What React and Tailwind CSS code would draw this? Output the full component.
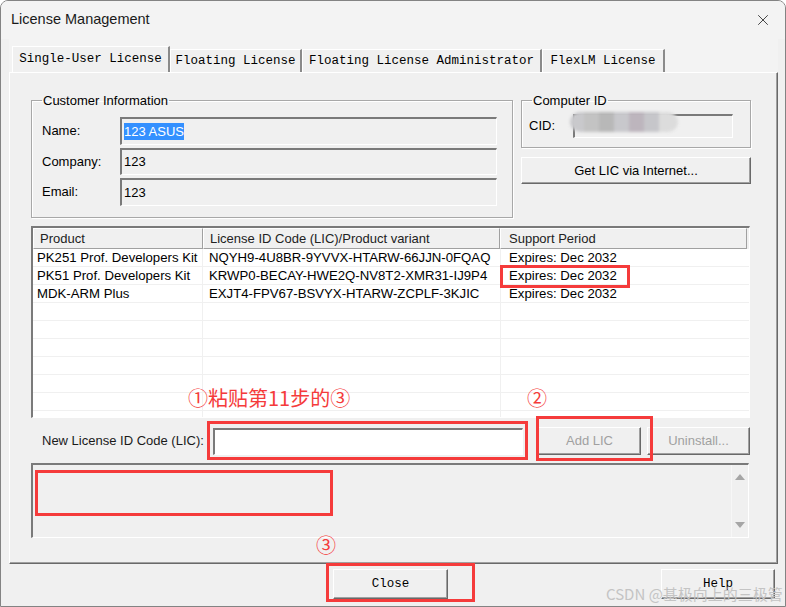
import { X } from 'lucide-react';

const sunken =
  'border-t-2 border-l-2 border-t-[#7a7a7a] border-l-[#7a7a7a] border-b border-r border-b-white border-r-white';
const raised =
  'border-t border-l border-t-white border-l-white border-b border-r border-b-[#696969] border-r-[#696969] shadow-[inset_-1px_-1px_0_#a0a0a0]';
const etched = 'border border-[#a8a8a8] shadow-[inset_1px_1px_0_#fff,1px_1px_0_#fff]';

const rows = [
  ['PK251 Prof. Developers Kit', 'NQYH9-4U8BR-9YVVX-HTARW-66JJN-0FQAQ', 'Expires: Dec 2032'],
  ['PK51 Prof. Developers Kit', 'KRWP0-BECAY-HWE2Q-NV8T2-XMR31-IJ9P4', 'Expires: Dec 2032'],
  ['MDK-ARM Plus', 'EXJT4-FPV67-BSVYX-HTARW-ZCPLF-3KJIC', 'Expires: Dec 2032'],
  ['', '', ''],
  ['', '', ''],
  ['', '', ''],
  ['', '', ''],
  ['', '', ''],
  ['', '', ''],
  ['', '', ''],
];

const tabs = [
  { label: 'Single-User License', w: 'w-[158px]', active: true },
  { label: 'Floating License', w: 'w-[132px]' },
  { label: 'Floating License Administrator', w: 'w-[240px]' },
  { label: 'FlexLM License', w: 'w-[123px]' },
];

function TitleBar() {
  return (
    <div className="flex h-[38px] items-center justify-between bg-[#f3f3f3] pl-[10px] pr-[13px]">
      <span className="text-[14.5px] text-[#1a1a1a]">License Management</span>
      <X size={18} strokeWidth={1.1} className="text-[#222]" />
    </div>
  );
}

function Tabs() {
  return (
    <div className="flex h-[33px] items-end bg-[#f3f3f3] pl-[3px] font-['Liberation_Mono',monospace] text-[12.5px]">
      {tabs.map((t) => (
        <div
          key={t.label}
          className={`${t.w} ${
            t.active ? 'h-[26px]' : 'h-[23px]'
          } flex items-center justify-center border-t border-l border-t-white border-l-white border-r-2 border-r-[#8a8a8a] bg-[#f0f0f0]`}
        >
          {t.label}
        </div>
      ))}
    </div>
  );
}

function Field({ children, white }) {
  return (
    <div className={`${sunken} flex h-full items-center pl-[2px] ${white ? 'bg-white' : 'bg-[#f0f0f0]'}`}>
      {children}
    </div>
  );
}

function Button({ children, className, disabled, mono }) {
  return (
    <div
      className={`${raised} flex items-center justify-center bg-[#f0f0f0] ${
        disabled ? 'text-[#a0a0a0]' : 'text-black'
      } ${mono ? "font-['Liberation_Mono',monospace] text-[12.5px]" : ''} ${className}`}
    >
      {children}
    </div>
  );
}

function CustomerGroup() {
  return (
    <fieldset className={`${etched} h-[125px] w-[482px] pl-[10px] pt-[9px]`}>
      <legend className="px-[1px] leading-[15px]">Customer Information</legend>
      <div className="grid grid-cols-[78px_377px] grid-rows-[28px_27px_28px] gap-y-[3px]">
        <span className="self-center">Name:</span>
        <Field>
          <span className="bg-[#3390ff] leading-[17px] text-white">123 ASUS</span>
        </Field>
        <span className="self-center">Company:</span>
        <Field>123</Field>
        <span className="self-center">Email:</span>
        <Field>123</Field>
      </div>
    </fieldset>
  );
}

function ComputerGroup() {
  return (
    <div className="flex flex-col">
      <fieldset className={`${etched} h-[55px] w-[230px] pl-[7px] pt-[6px]`}>
        <legend className="ml-[3px] px-[1px] leading-[15px]">Computer ID</legend>
        <div className="flex items-center">
          <span className="w-[44px]">CID:</span>
          <div className="relative h-[24px] w-[160px]">
            <Field />
            {/* mosaic over the masked id */}
            <div className="absolute left-[-3px] top-[-2px] flex h-[20px] w-[108px] overflow-hidden rounded-full blur-[1.5px]">
              <div className="w-[14px] bg-[#c9c9cc]" />
              <div className="w-[15px] bg-[#c3c3c3]" />
              <div className="w-[15px] bg-[#b8b8b8]" />
              <div className="w-[15px] bg-[#c8c8cc]" />
              <div className="w-[15px] bg-[#bdb5bd]" />
              <div className="w-[15px] bg-[#c6c6ca]" />
              <div className="w-[19px] bg-[#dcdcdc]" />
            </div>
          </div>
        </div>
      </fieldset>
      <Button className="mt-[9px] h-[27px] w-[230px]">Get LIC via Internet...</Button>
    </div>
  );
}

function LicenseTable() {
  return (
    <div className={`${sunken} mt-[8px] flex h-[192px] w-[719px] flex-col overflow-hidden bg-white`}>
      <div className="flex h-[21px] shrink-0">
        {['Product', 'License ID Code (LIC)/Product variant', 'Support Period'].map((h, i) => (
          <div
            key={h}
            className={`${
              ['w-[170px] pl-[6px]', 'w-[297px] pl-[6px]', 'w-[247px] pl-[8px]'][i]
            } flex items-center border-t border-l border-t-white border-l-white border-b border-r border-b-[#a0a0a0] border-r-[#a0a0a0] bg-[#f0f0f0] text-[#222]`}
          >
            {h}
          </div>
        ))}
        <div className="flex-1 bg-[#f0f0f0]" />
      </div>
      {rows.map((r, i) => (
        <div key={i} className="flex h-[18px] shrink-0 border-b border-b-[#f0f0f0] text-[13.2px] leading-[17px]">
          <div className="w-[170px] border-r border-r-[#f0f0f0] pl-[4px]">{r[0]}</div>
          <div className="w-[298px] border-r border-r-[#f0f0f0] pl-[6px]">{r[1]}</div>
          <div className="flex-1 pl-[8px]">{r[2]}</div>
        </div>
      ))}
    </div>
  );
}

function Panel() {
  return (
    <div className="h-[492px] border-t border-l border-t-white border-l-white border-r border-b border-r-[#696969] border-b-[#696969] bg-[#f0f0f0] pl-[21px] pt-[20px] shadow-[inset_-1px_-1px_0_#a0a0a0]">
      <div className="flex items-start gap-[8px]">
        <CustomerGroup />
        <ComputerGroup />
      </div>
      <LicenseTable />
      <div className="mt-[9px] flex h-[28px] items-center">
        <span className="w-[182px] pl-[11px] text-[#1a1a1a]">New License ID Code (LIC):</span>
        <div className="h-[27px] w-[310px]">
          <Field white />
        </div>
        <Button disabled className="ml-[15px] h-[28px] w-[103px]">Add LIC</Button>
        <Button disabled className="ml-[6px] h-[28px] w-[103px]">Uninstall...</Button>
      </div>
      <div className={`${sunken} mt-[8px] flex h-[75px] w-[718px] bg-[#f0f0f0]`}>
        <div className="flex-1" />
        <div className="flex w-[17px] flex-col items-center justify-between border-l border-l-[#f7f7f7] py-[9px]">
          <div className="h-0 w-0 border-x-[5px] border-b-[6px] border-x-transparent border-b-[#a6a6a6]" />
          <div className="h-0 w-0 border-x-[5px] border-t-[6px] border-x-transparent border-t-[#a6a6a6]" />
        </div>
      </div>
    </div>
  );
}

function BottomButtons() {
  return (
    <div className="flex pt-[5px]">
      <Button mono className="ml-[332px] h-[30px] w-[115px]">Close</Button>
      <Button mono className="ml-[213px] h-[30px] w-[114px]">Help</Button>
    </div>
  );
}

function Annotations() {
  const red = 'absolute border-[3px] border-[#f53b3b]';
  const note = "absolute font-['Noto_Sans_CJK_SC',sans-serif] text-[20px] leading-[24px] text-[#f53b3b]";
  return (
    <>
      <div className={`${red} left-[500px] top-[265px] h-[23px] w-[130px]`} />
      <div className={`${note} left-[188px] top-[386px]`}>①粘贴第11步的③</div>
      <div className={`${note} left-[527px] top-[386px]`}>②</div>
      <div className={`${red} left-[207px] top-[421px] h-[39px] w-[321px]`} />
      <div className={`${red} left-[536px] top-[416px] h-[45px] w-[117px]`} />
      <div className={`${red} left-[35px] top-[470px] h-[46px] w-[298px]`} />
      <div className={`${note} left-[316px] top-[533px]`}>③</div>
      <div className={`${red} left-[326px] top-[563px] h-[39px] w-[149px]`} />
      <div className="absolute left-[606px] top-[585px] font-['Noto_Sans_CJK_SC',sans-serif] text-[15px] leading-[17px] text-[#c4c4c4]">
        CSDN @基极向上的三极管
      </div>
    </>
  );
}

export default function App() {
  return (
    <div className="relative h-[607px] w-[786px] bg-white font-['Liberation_Sans',Arial,sans-serif] text-[13px] text-black">
      <div className="flex h-full w-full flex-col overflow-hidden rounded-t-[8px] border border-[#838383] bg-[#f0f0f0]">
        <TitleBar />
        <div className="pl-[8px] pr-[7px]">
          <Tabs />
          <Panel />
        </div>
        <BottomButtons />
      </div>
      <Annotations />
    </div>
  );
}
